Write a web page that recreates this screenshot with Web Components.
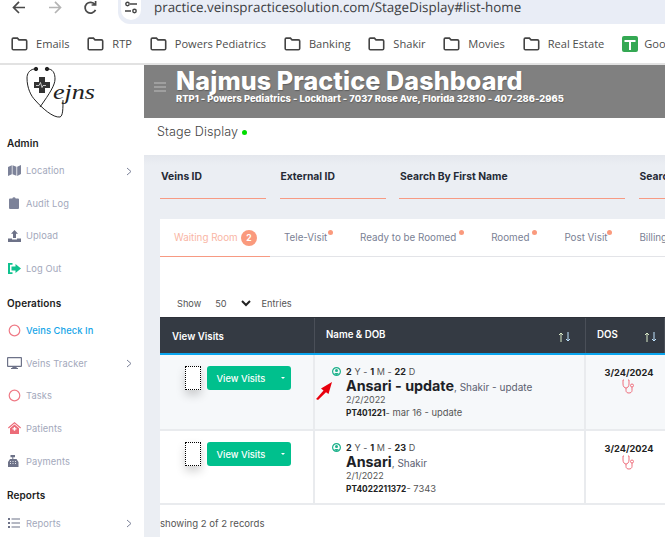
<!DOCTYPE html>
<html><head><meta charset="utf-8"><title>Stage Display</title>
<style>
html,body{margin:0;height:537px;overflow:hidden;background:#fff;font-family:Inter,"Open Sans",sans-serif}
</style></head><body>
<browser-bar></browser-bar>
<app-shell>
  <side-nav slot="side"></side-nav>
  <top-header slot="main" title-text="Najmus Practice Dashboard" sub="RTP1 - Powers Pediatrics - Lockhart - 7037 Rose Ave, Florida 32810 - 407-286-2965"></top-header>
  <stage-head slot="main"></stage-head>
  <filter-bar slot="main"></filter-bar>
  <visit-card slot="main">
    <tab-strip></tab-strip>
    <entries-line></entries-line>
    <table-head></table-head>
    <visit-row age="22" name="Ansari - update" first="Shakir - update" dob="2/2/2022" pt="PT401221" note="mar 16 - update" tint arrow></visit-row>
    <visit-row age="23" name="Ansari" first="Shakir" dob="2/1/2022" pt="PT4022211372" note="7343"></visit-row>
    <records-line></records-line>
  </visit-card>
</app-shell>
<script>
const def=(n,html)=>{customElements.define(n,class extends HTMLElement{
  connectedCallback(){if(this.shadowRoot)return;const r=this.attachShadow({mode:'open'});
    r.innerHTML=typeof html==='function'?html(this):html;}
});};
const folder=`<svg width="17" height="14" viewBox="0 0 17 14" fill="none" stroke="#444" stroke-width="1.6"><path d="M1.2 2.3q0-1.2 1.2-1.2h4l1.6 1.8h6.4q1.3 0 1.3 1.2v7.4q0 1.3-1.3 1.3H2.400q-1.200 0-1.200-1.300z"/></svg>`;
def('browser-bar',`<style>
:host{display:block;height:65px;box-sizing:border-box;border-bottom:2px solid #e2e2e2;background:#fff;font-family:"Open Sans",sans-serif}
.top{display:flex;height:24px;align-items:flex-start}
.btns{width:118px;display:flex;padding-left:11px;gap:20px;box-sizing:border-box}
.pill{flex:1;height:24px;background:#e9edf6;border-bottom-left-radius:12px;display:flex;align-items:flex-start;padding-left:3px}
.tune{width:20px;height:20px;background:#fff;border-radius:0 0 10px 10px;display:flex;justify-content:center;margin-right:13px;padding-top:1px;box-sizing:border-box}
.url{font-size:13.400px;line-height:15px;color:#3d4043;white-space:nowrap;text-rendering:geometricPrecision}
.marks{display:flex;height:39px;align-items:center;padding-left:11px;gap:17.800px;overflow:hidden;white-space:nowrap}
</style>
<div class="top"><div class="btns">
<svg width="16" height="15" viewBox="0 0 16 15" fill="none" stroke="#4a4a4a" stroke-width="1.7"><path d="M14 7.500H3M8 1.800 2.500 7.500 8 13"/></svg>
<svg width="16" height="15" viewBox="0 0 16 15" fill="none" stroke="#b4b4b4" stroke-width="1.700"><path d="M2 7.500h11M8 1.800l5.500 5.700L8 13"/></svg>
<svg width="15" height="15" viewBox="0 0 15 15" fill="none" stroke="#4a4a4a" stroke-width="1.700"><path d="M12.500 9.800a5.400 5.400 0 1 1-.6-5.300M12.600 1v4h-4"/></svg>
</div><div class="pill"><div class="tune"><svg width="14" height="13" viewBox="0 0 14 13" fill="none" stroke="#444" stroke-width="1.400"><circle cx="3.500" cy="3" r="1.700"/><path d="M6 3h7M1 10h6"/><circle cx="10.500" cy="10" r="1.700"/></svg></div><span class="url">practice.veinspracticesolution.com/StageDisplay#list-home</span></div></div>
<div class="marks">
<book-mark>Emails</book-mark><book-mark>RTP</book-mark><book-mark>Powers Pediatrics</book-mark><book-mark>Banking</book-mark><book-mark>Shakir</book-mark><book-mark>Movies</book-mark><book-mark>Real Estate</book-mark><book-mark green>Google</book-mark>
</div>`);
def('book-mark',h=>`<style>:host{display:flex;align-items:center;gap:8px;font-size:11.100px;color:#4d4d4d}
</style>${h.hasAttribute('green')?`<svg width="16" height="16" viewBox="0 0 16 16" style="margin-right:-2px"><rect width="16" height="16" rx="2" fill="#34a853"/><path d="M2.500 5h11M8 5v9" stroke="#fff" stroke-width="2"/></svg>`:folder}<slot></slot>`);
def('app-shell',`<style>:host{display:flex;height:472px;overflow:hidden;background:#ebeef3}
.s{width:144px;flex:none;background:#fff;overflow:hidden}.m{flex:1;min-width:0;overflow:hidden}</style>
<div class="s"><slot name="side"></slot></div><div class="m"><slot name="main"></slot></div>`);
const ic={
map:`<svg width="13" height="11" viewBox="0 0 13 11" fill="#7c8299"><path d="M0 2 3.800.3v8.900L0 11zM4.500.3l3.900 1.400v9L4.500 9.300zM9.200 1.800 13 0v9l-3.800 2z"/></svg>`,
clip:`<svg width="10" height="12" viewBox="0 0 10 12" fill="#7c8299"><path d="M1 1.500h2.300a1.800 1.800 0 0 1 3.400 0H9a1 1 0 0 1 1 1V11a1 1 0 0 1-1 1H1a1 1 0 0 1-1-1V2.500a1 1 0 0 1 1-1z"/></svg>`,
up:`<svg width="13" height="12" viewBox="0 0 13 12" fill="#6d7288"><path d="M6.500 0 10 3.800H8V8H5V3.800H3zM0 8.500h4V9.500h5v-1h4V12H0z"/></svg>`,
out:`<svg width="13" height="11" viewBox="0 0 13 11" fill="#0fc28f"><path d="M4.500 0v1.700H2v7.600h2.500V11H0V0z"/><path d="M7.500 1 13 5.500 7.500 10V7.500H3.500v-4h4z"/></svg>`,
ring:()=>`<svg width="13" height="13" viewBox="0 0 13 13" fill="none" stroke="#ef7b87" stroke-width="1.200"><circle cx="6.500" cy="6.500" r="5.300"/></svg>`,
desk:`<svg width="15" height="12" viewBox="0 0 15 12" fill="#6d7288"><path fill-rule="evenodd" d="M1 0h13a1 1 0 0 1 1 1v8a1 1 0 0 1-1 1H9.500l.3 1H11v1H4v-1h1.200l.3-1H1a1 1 0 0 1-1-1V1a1 1 0 0 1 1-1zm.2 1.200v7.600h12.600V1.200z"/></svg>`,
home:`<svg width="13" height="12" viewBox="0 0 13 12" fill="#ec6b78"><path d="M6.500 0 13 5.600 12.300 6.400 6.500 1.500.7 6.400 0 5.600z"/><path d="M6.500 2.500 11 6.300V12H2V6.300zM5.800 5v1.300H4.500v1.200h1.300v1.300H7.200V7.500h1.300V6.300H7.200V5z" fill-rule="evenodd"/></svg>`,
reg:`<svg width="12" height="12" viewBox="0 0 12 12" fill="#6d7288"><path d="M2.500 0H7v2.300H5.300V4H8.500L10.500 7v5H0V7l2-3h2.300V2.300H2.500z"/><path d="M2 6.500h1M4.500 6.500h1M7 6.500h1M2 8.500h1M4.500 8.500h1M7 8.500h1" stroke="#fff" stroke-width=".8"/></svg>`,
list:`<svg width="12" height="10" viewBox="0 0 12 10" fill="#6d7288"><path d="M0 0h2v2H0zM0 4h2v2H0zM0 8h2v2H0zM3.500.4H12v1.200H3.500zM3.500 4.400H12v1.200H3.500zM3.500 8.400H12v1.200H3.500z"/></svg>`
};
const navItems=[['t','Admin'],['i',ic.map,'Location',1],['i',ic.clip,'Audit Log'],['i',ic.up,'Upload'],['i',ic.out,'Log Out'],['t','Operations'],['a',ic.ring(),'Veins Check In'],['i',ic.desk,'Veins Tracker',1],['i',ic.ring(),'Tasks'],['i',ic.home,'Patients'],['i',ic.reg,'Payments'],['t','Reports'],['i',ic.list,'Reports',1]];
def('side-nav',`<style>
:host{display:block;background:#fff}
.logo{height:70px;padding:1px 0 0 26px;box-sizing:border-box}
.t{font-weight:600;font-size:10px;color:#1c1c1c;height:16px;line-height:16px;padding-left:7px;margin-bottom:3.500px;letter-spacing:.1px}
.t.mid{margin-top:10px}
.i{height:32.600px;display:flex;align-items:center;font-size:9.300px;color:#a3a8bb;letter-spacing:.1px;position:relative}
.ico{width:26px;flex:none;display:flex;justify-content:center;box-sizing:border-box;padding-left:2px}
.a{color:#16a5e8;font-weight:500}
.ch{position:absolute;left:126px;top:12px}
</style>
<div class="logo"><svg width="72" height="56" viewBox="0 0 72 56" fill="none" stroke="#222">
<path d="M8 3C3 4 1 8 1 12 1 22 5 30 9 34 16 42 27 52 34 51 37 50 37 42 37 34" stroke-width="1"/>
<path d="M23 3C28 4 29 9 29 13 29 19 24 27 14 41" stroke-width="1"/>
<circle cx="10" cy="3" r="1.700" fill="#222"/><circle cx="21" cy="3" r="1.700" fill="#222"/>
<path d="M13 11h6v5h5v6h-5v5h-6v-5H8v-6h5z" fill="#333" stroke="none"/>
<path d="M10 19.500h3l1.500-3 1.500 5 1-2h3" stroke="#fff" stroke-width=".7"/>
<text x="27" y="33" font-family="'Liberation Serif',serif" font-style="italic" font-size="20" fill="#222" stroke="none" textLength="42" lengthAdjust="spacingAndGlyphs">ejns</text>
</svg></div>
<div>${navItems.map((n,k)=>n[0]==='t'?`<div class="t ${k?'mid':''}">${n[1]}</div>`:`<div class="i ${n[0]==='a'?'a':''}"><span class="ico">${n[1]}</span><span>${n[2]}</span>${n[3]?`<svg class="ch" width="6" height="9" viewBox="0 0 6 9" fill="none" stroke="#7c8299" stroke-width="1"><path d="M1 1l4 3.500L1 8"/></svg>`:''}</div>`).join('')}</div>`);
def('top-header',h=>`<style>
:host{display:flex;height:53px;background:#808080;color:#fff;box-sizing:border-box;padding:4px 0 0 10px;overflow:hidden}
.b{width:12px;margin-top:13px;flex:none}
.x{margin-left:10px;white-space:nowrap}
.t{font-size:25.100px;font-weight:800;line-height:25px;letter-spacing:.1px;text-shadow:.5px .5px 1px rgba(60,60,60,.5)}
.s{font-size:9.330px;font-weight:800;line-height:10px;letter-spacing:.02px;text-shadow:.5px .5px 1px rgba(60,60,60,.5)}
</style><svg class="b" width="12" height="10" viewBox="0 0 12 10" stroke="#bdbdbd" stroke-width="1.200"><path d="M0 1h12M0 5h12M0 9h12"/></svg>
<div class="x"><div class="t">${h.getAttribute('title-text')}</div><div class="s">${h.getAttribute('sub')}</div></div>`);
def('stage-head',`<style>:host{display:flex;height:37px;background:#fff;box-sizing:border-box;padding:6px 0 0 13px;font-size:12.600px;font-weight:300;color:#444;align-items:flex-start;gap:4px;letter-spacing:.1px;line-height:16px}
i{width:5px;height:5px;border-radius:50%;background:#0d0;margin-top:6px}</style>Stage Display <i></i>`);
def('filter-bar',`<style>:host{display:grid;grid-template-columns:106px 106px 226px 106px;column-gap:13.500px;padding:0 0 0 16px;height:64px;background:linear-gradient(#e4e7ed,#ebeef3 10px);box-sizing:border-box}
div{font-size:10.300px;font-weight:700;color:#252a36;height:44px;box-sizing:border-box;padding:15px 0 0 1px;border-bottom:1px solid #f79a83;white-space:nowrap;line-height:12px}
</style><div>Veins ID</div><div>External ID</div><div>Search By First Name</div><div>Search By Last Name</div>`);
def('visit-card',`<style>:host{display:block;margin-left:16px;background:#fff;height:319px;overflow:hidden}</style><slot></slot>`);
def('tab-strip',`<style>:host{display:flex;height:38px;box-sizing:border-box;border-bottom:1px solid #e3e4e8;font-size:9.800px;color:#7a7f94;white-space:nowrap;align-items:center;position:relative}
span{position:relative;display:inline-flex;align-items:center}
.a{width:110px;height:37px;box-sizing:border-box;padding-left:14px;color:#f9b6a5;border-bottom:1px solid #f79a83;margin-bottom:-1px;flex:none}
.w{display:inline-block;width:67px}
.n{width:16px;height:16px;border-radius:50%;background:#fa9a7d;color:#fff;font-weight:700;font-size:8.500px;display:flex;align-items:center;justify-content:center}
.d{margin-left:14px}
.d::after{content:"";position:absolute;right:-8px;top:-2px;width:5px;height:5px;border-radius:50%;background:#fa9a7d}
.g1{margin-left:14px;width:41px}.g2{margin-left:35px;width:97px}.g3{margin-left:35px;width:39px}.g4{margin-left:35px;width:40px}.g5{margin-left:35px}
</style>
<span class="a"><span class="w">Waiting Room</span><b class="n">2</b></span>
<span class="d g1">Tele-Visit</span><span class="d g2">Ready to be Roomed</span><span class="d g3">Roomed</span><span class="d g4">Post Visit</span><span class="d g5">Billing</span>`);
def('entries-line',`<style>:host{display:flex;align-items:center;height:60px;box-sizing:border-box;padding:33px 0 0 17px;font-size:9.200px;color:#555}
.n{margin-left:14px}svg{margin:0 11px 0 14px}
</style><span>Show</span><span class="n">50</span><svg width="10" height="7" viewBox="0 0 10 7" fill="none" stroke="#222" stroke-width="2"><path d="M1 1l4 4 4-4"/></svg><span>Entries</span>`);
const arrows=`<svg width="14" height="10" viewBox="0 0 14 10" fill="none" stroke-width="1"><path d="M3 10V1M1 3l2-2 2 2" stroke="#d9e9c8"/><path d="M10 0v9M8 7l2 2 2-2" stroke="#bfe3ff"/></svg>`;
def('table-head',`<style>:host{display:grid;grid-template-columns:155px 271px 1fr;height:38px;background:#343a43;color:#fff;border-bottom:2px solid #0aa5ee;box-sizing:border-box;font-size:9.700px;font-weight:600;border-top:1px solid #2d3139}
div{position:relative;box-sizing:border-box;padding-left:11px;border-right:1px solid #4a4f58;white-space:nowrap}
.a{padding:13px 0 0 12px}.b{padding-top:11px}
svg{position:absolute;top:14px}
</style><div class="a">View Visits</div><div class="b">Name &amp; DOB${arrows.replace('<svg','<svg style="left:243px"')}</div><div class="b">DOS${arrows.replace('<svg','<svg style="left:58px"')}</div>`);
def('visit-row',h=>`<style>:host{display:grid;grid-template-columns:155px 271px 1fr;height:${h.hasAttribute('tint')?76:74}px;box-sizing:border-box;border-bottom:2px solid #e9ebee;background:${h.hasAttribute('tint')?'#f6f8fa':'#fff'};color:#222;position:relative}
.c{border-right:2px solid #e9ebee;box-sizing:border-box;position:relative}
.act{display:flex;padding:11px 0 0 25px;gap:6px;align-items:flex-start}
.dot{width:16px;height:24px;box-sizing:border-box;border:1px dotted #000;background:#fff;box-shadow:0 5px 10px rgba(0,0,0,.18)}
.btn{width:84px;height:24px;border-radius:3px;background:#00c08d;color:#fff;font-size:9.300px;font-weight:500;display:flex;align-items:center;padding-left:9.500px;box-sizing:border-box;position:relative}
.btn::after{content:"";position:absolute;right:6px;top:11px;border:2.500px solid transparent;border-top-color:#fff;border-bottom:0}
.who{padding:11px 0 0 31px;display:block;white-space:nowrap}
.pi{position:absolute;left:17px;top:12px}
.age{font-size:9px;line-height:12px;color:#555;letter-spacing:.1px}.age b{color:#222;font-weight:700}
.nm{font-size:14.300px;font-weight:700;line-height:16px;color:#1d1f27}
.nm small{font-size:10px;font-weight:400;color:#5b6070}
.dob{font-size:9px;line-height:14px;color:#555;margin-top:-2px}
.pt{font-size:9.400px;line-height:9px;color:#555;margin-top:1px}.pt b{font-size:8.300px;color:#222;font-weight:700;letter-spacing:.05px}
.dos{text-align:center;font-size:9.200px;font-weight:700;padding-top:11px;line-height:13px;width:86px}
.dos svg{display:block;margin:0 auto}
.arrow{position:absolute;left:155px;top:26px}
</style>
<div class="c act"><span class="dot"></span><span class="btn">View Visits</span></div>
<div class="c who"><svg class="pi" width="9" height="9" viewBox="0 0 9 9" fill="none"><circle cx="4.500" cy="4.500" r="3.900" stroke="#1fb28c" stroke-width="1.200"/><circle cx="4.500" cy="3.500" r="1.500" fill="#1fb28c"/><path d="M2 7c.5-1.500 4.500-1.500 5 0l-2.500 1z" fill="#1fb28c"/></svg>
<div class="age"><b>2</b> Y - <b>1</b> M - <b>${h.getAttribute('age')}</b> D</div>
<div class="nm">${h.getAttribute('name')}<small>, ${h.getAttribute('first')}</small></div>
<div class="dob">${h.getAttribute('dob')}</div>
<div class="pt"><b>${h.getAttribute('pt')}</b>- ${h.getAttribute('note')}</div></div>
<div class="dos">3/24/2024<svg width="14" height="15" viewBox="0 0 14 15" fill="none" stroke="#ef6f7d" stroke-width="1"><path d="M2 1H1v4c0 2.500 1.500 4 3 4s3-1.500 3-4V1H6M4 9v2.500C4 13.500 5.500 14 7 14s3-.8 3-2.500V8"/><circle cx="10" cy="6.500" r="1.500"/></svg></div>
${h.hasAttribute('arrow')?`<svg class="arrow" width="18" height="19" viewBox="0 0 18 19"><path d="M1 18 2 17 8.500 9.500 6 7.500 17 1 13.500 13 11 11.200 3 19z" fill="#e8000d"/></svg>`:''}`);
def('records-line',`<style>:host{display:block;font-size:9.600px;color:#555;padding-top:12px;line-height:14px}</style>showing 2 of 2 records`);
</script></body></html>
